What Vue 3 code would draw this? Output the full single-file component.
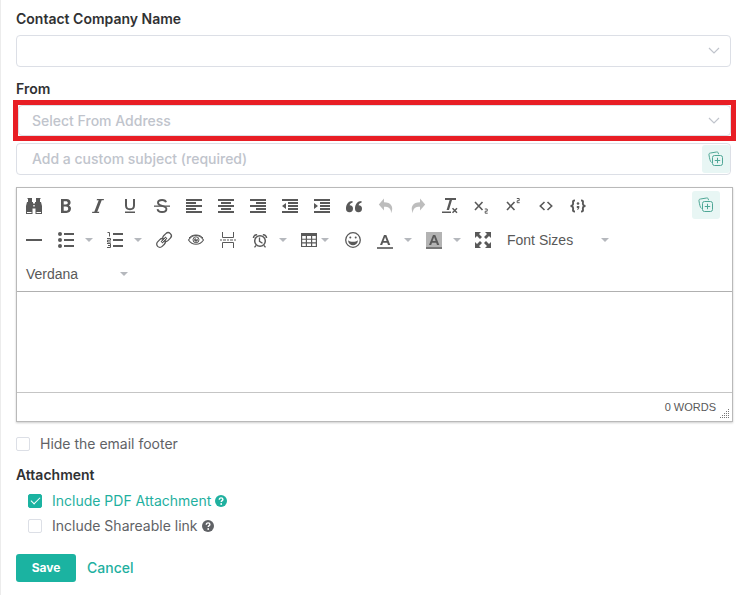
<script setup>
import { ref } from 'vue'

const company = ref('')
const from = ref('')
const subject = ref('')
const body = ref('')
const hideFooter = ref(false)
const includePdf = ref(true)
const includeLink = ref(false)

const letterShape = '<path d="M3 12 7 2h2.300L13.300 12H11l-.8-2.300H6L5.200 12Zm3.600-4h3L8.100 4Z"/>'

const icons = {
  find: '<path d="M1.500 0h4.500v1H1.500zM10 0h4.500v1H10zM2 1h4v3H2zM10 1h4v3h-4zM1 4h6v1.500h2V4h6l1 4v8H9.500v-5.500h-3V16H0V8Z"/><path fill="#fff" d="M1 14h4.500v1H1zM10.500 14H15v1h-4.500zM7.300 7h1.400v1.500H7.300z"/>',
  bold: '<path fill-rule="evenodd" d="M3 1h5.500C11.200 1 12.600 2.500 12.600 4.500c0 1.400-.7 2.400-1.800 2.900C12.200 7.900 13 9 13 10.600 13 13.300 11.200 15 8.400 15H3Zm2.700 2.200v3.300h2c1.400 0 2.100-.6 2.100-1.700S9.100 3.200 7.700 3.200Zm0 5.400v4.200h2.200c1.500 0 2.300-.8 2.300-2.100s-.8-2.100-2.300-2.100Z"/>',
  italic: '<path d="M7 1h7l-.3 1.200h-2L7.300 13.800h2L9 15H2l.3-1.200h2L8.700 2.200h-2Z"/>',
  underline: '<path d="M3 1h2v6.500C5 9.500 6 10.300 8 10.300s3-.8 3-2.800V1h2v6.600c0 3-1.700 4.600-5 4.600s-5-1.600-5-4.600ZM3 13.500h10V15H3z"/>',
  strike: '<path d="M0 7.500h16v1.300H0z"/><path fill="none" stroke="currentColor" stroke-width="1.900" d="M12 4.300C11.700 2.700 10.300 2 8.100 2 5.600 2 4 3 4 4.700 4 8.800 12.400 6.800 12.400 11c0 2-1.700 3-4.300 3s-4.300-1-4.500-2.900"/>',
  left: '<path d="M0 1h16v2H0zM0 4h10v2H0zM0 7h16v2H0zM0 10h10v2H0zM0 13h16v2H0z"/>',
  center: '<path d="M0 1h16v2H0zM3 4h10v2H3zM0 7h16v2H0zM3 10h10v2H3zM0 13h16v2H0z"/>',
  right: '<path d="M0 1h16v2H0zM6 4h10v2H6zM0 7h16v2H0zM6 10h10v2H6zM0 13h16v2H0z"/>',
  outdent: '<path d="M0 1h16v2H0zM6 4h10v2H6zM6 7h10v2H6zM6 10h10v2H6zM0 13h16v2H0zM4 5v6L0 8Z"/>',
  indent: '<path d="M0 1h16v2H0zM6 4h10v2H6zM6 7h10v2H6zM6 10h10v2H6zM0 13h16v2H0zM0 5l4 3-4 3Z"/>',
  quote: '<path d="M3.600 7.200A3.500 3.500 0 1 1 0 10.700C-.2 6.500 2.500 3 6.500 3v1.800c-1.500 0-2.500 1-2.900 2.400ZM12.600 7.200A3.500 3.500 0 1 1 9 10.700C8.800 6.500 11.500 3 15.500 3v1.800c-1.500 0-2.500 1-2.900 2.400Z"/>',
  undo: '<path d="M6 .5v3.700c7 0 10.300 4.800 7 11 .3-4.500-2.200-6.400-7-6.400v3.700L.8 6.500Z"/>',
  redo: '<path d="M10 .5v3.700c-7 0-10.300 4.800-7 11-.3-4.500 2.200-6.400 7-6.400v3.700l5.200-6Z"/>',
  clear: '<path d="M3 0h11v2h-4L7 12H4.600l3-10H3ZM0 13.500h9V15H0z"/><path fill="none" stroke="currentColor" stroke-width="1.500" d="m10.500 10.300 4.500 4.500m0-4.500-4.500 4.500"/>',
  sub: '<path fill="none" stroke="currentColor" stroke-width="1.600" d="m1 4 7.500 8m0-8L1 12"/><path fill="none" stroke="currentColor" d="M10.800 11h2.400v2.200h-2v2h2.500"/>',
  sup: '<path fill="none" stroke="currentColor" stroke-width="1.600" d="m1 4 7.500 8m0-8L1 12"/><path fill="none" stroke="currentColor" d="M10.800.500h2.400v2.200h-2v2h2.500"/>',
  code: '<path fill="none" stroke="currentColor" stroke-width="1.600" d="M6.500 4 2.300 8l4.200 4M9.500 4l4.200 4-4.200 4"/>',
  sample: '<path fill="none" stroke="currentColor" stroke-width="1.900" d="M5 2.500c-3 0-1.700 1.600-1.900 3.300C3 7.300 2 8 .5 8c1.500 0 2.500.7 2.600 2.200C3.300 12 2 13.500 5 13.500M11 2.500c3 0 1.700 1.600 1.900 3.300.1 1.500 1.100 2.200 2.600 2.200-1.500 0-2.500.7-2.600 2.200C12.700 12 14 13.500 11 13.500"/><circle cx="8" cy="5.500" r="1.300"/><path d="M6.800 8h2.500c.3 2.100-.4 3.500-2 4V11l.8-1H6.800Z"/>',
  rule: '<path d="M0 7h16v2H0z"/>',
  bullets: '<circle cx="2" cy="2" r="2"/><circle cx="2" cy="8" r="2"/><circle cx="2" cy="14" r="2"/><path d="M6 1h10v2H6zM6 7h10v2H6zM6 13h10v2H6z"/>',
  numbers: '<path d="M6 1h10v2H6zM6 7h10v2H6zM6 13h10v2H6z"/><path fill="none" stroke="currentColor" d="M.5.500h2V4.500M0 6.500h3.500v1.700H.5v1.800h3.500M0 11.500h3.500v4H0M1 13.500h2.500"/>',
  link: '<g fill="none" stroke="currentColor" transform="rotate(-45 8 8)"><rect x="-1" y="4.800" width="9.500" height="6.400" rx="3.200" stroke-width="1.300"/><rect x="7.500" y="4.800" width="9.500" height="6.400" rx="3.200" stroke-width="1.300"/><path stroke-width="2.600" d="M4.500 8h7"/><path stroke="#fff" stroke-width=".8" d="M5 8h6"/></g>',
  preview: '<g fill="none" stroke="currentColor"><path stroke-width="1.100" d="M.5 8C2.500 4.800 5 3.500 8 3.500s5.500 1.300 7.500 4.500c-2 3-4.500 4.300-7.500 4.300S2.500 11 .5 8Z"/><path d="M1 6C4 2 12 2 15 6"/><circle cx="8" cy="7.800" r="3"/></g><circle cx="8" cy="7.800" r="1.900"/><path fill="#fff" d="M7.700 6h1.500v1.400H7.700z"/>',
  pagebreak: '<path fill="none" stroke="currentColor" d="M2.500 0v5.500h11V0M2.500 16v-5.500h11V16"/><path d="M0 7.500h2v1H0zM3 7.500h3v1H3zM7 7.500h2v1H7zM10 7.500h3v1h-3zM14 7.500h2v1h-2z"/>',
  alarm: '<g fill="none" stroke="currentColor"><circle cx="8" cy="9" r="5.300" stroke-width="1.500"/><path stroke-width="1.300" d="M7.500 5.500V9.300l3 2M4 13.500l-1.500 1.800M12 13.500l1.500 1.800"/><path stroke-width="1.600" d="M1.500 6c0-2 1.700-3.500 3.600-3.300M14.500 6c0-2-1.700-3.500-3.600-3.300"/></g>',
  table: '<path fill-rule="evenodd" d="M0 1h16v14H0Zm1.200 3v2.700h3.600V4Zm4.800 0v2.700h4V4Zm5.200 0v2.700h3.600V4ZM1.200 7.800v2.500h3.600V7.800Zm4.800 0v2.500h4V7.800Zm5.200 0v2.500h3.600V7.800ZM1.200 11.400v2.500h3.600v-2.500Zm4.800 0v2.500h4v-2.500Zm5.200 0v2.500h3.600v-2.500Z"/>',
  emoji: '<circle cx="8" cy="8" r="7.300" fill="none" stroke="currentColor" stroke-width="1.300"/><circle cx="5.300" cy="5.400" r="1"/><circle cx="10.700" cy="5.400" r="1"/><path fill-rule="evenodd" d="M3 8.300C5.500 10.300 10.500 10.300 13 8.300 12.500 15 3.500 15 3 8.300Z"/>',
  color: '<g transform="translate(0 1)">' + letterShape + '</g><path fill="#777" d="M0 15h16v2H0z"/>',
  background: '<path fill="#b3b3b3" d="M0 0h16v15H0z"/><g transform="translate(0 1)">' + letterShape + '</g><path fill="#777" d="M0 15h16v2H0z"/>',
  fullscreen: '<path d="M0 0h6L4 2l3 3-2 2-3-3-2 2ZM16 0v6l-2-2-3 3-2-2 3-3-2-2ZM0 16v-6l2 2 3-3 2 2-3 3 2 2ZM16 16h-6l2-2-3-3 2-2 3 3 2-2Z"/>'
}

const rowOne = [
  ['find', 'Find and replace'], ['bold', 'Bold'], ['italic', 'Italic'],
  ['underline', 'Underline'], ['strike', 'Strikethrough'], ['left', 'Align left'],
  ['center', 'Align center'], ['right', 'Align right'], ['outdent', 'Decrease indent'],
  ['indent', 'Increase indent'], ['quote', 'Blockquote'], ['undo', 'Undo', 'disabled'],
  ['redo', 'Redo', 'disabled'], ['clear', 'Clear formatting'], ['sub', 'Subscript'],
  ['sup', 'Superscript'], ['code', 'Source code'], ['sample', 'Code sample']
]
const rowTwo = [
  ['rule', 'Horizontal line'], ['bullets', 'Bullet list', 'split'], ['numbers', 'Numbered list', 'split'],
  ['link', 'Insert link'], ['preview', 'Preview'], ['pagebreak', 'Page break'],
  ['alarm', 'Insert date/time', 'split'], ['table', 'Table', 'menu'], ['emoji', 'Emoticons'],
  ['color', 'Text color', 'split'], ['background', 'Background color', 'split'], ['fullscreen', 'Fullscreen']
]
const toolRows = [rowOne, rowTwo]
</script>

<template>
  <form class="compose" @submit.prevent>
    <label class="heading" for="company">Contact Company Name</label>
    <div class="select-box company">
      <select id="company" v-model="company"><option value=""></option></select>
      <svg class="chevron" viewBox="0 0 12 8" aria-hidden="true"><path d="m1 1 5 5 5-5" /></svg>
    </div>

    <label class="heading" for="from">From</label>
    <div class="highlight">
      <div class="select-box">
        <select id="from" v-model="from"><option value="">Select From Address</option></select>
        <svg class="chevron" viewBox="0 0 12 8" aria-hidden="true"><path d="m1 1 5 5 5-5" /></svg>
      </div>
    </div>
    <div class="subject">
      <input v-model="subject" type="text" aria-label="Subject" placeholder="Add a custom subject (required)">
      <button type="button" class="insert" aria-label="Insert subject field">
        <svg viewBox="0 0 16 16" aria-hidden="true"><path d="M3.500 11.500C2 10.500 1.500 7 1 4 .8 2.600 1.300 2.200 2.500 2L8.500 1c1.300-.2 1.800.3 2 2.200" /><rect x="4.500" y="4.500" width="10" height="10" rx="2" /><path d="M9.500 6.800v5.400M6.800 9.500h5.400" /></svg>
      </button>
    </div>

    <div class="editor">
      <div class="toolbar">
        <div class="tool-rows">
          <div v-for="(row, i) in toolRows" :key="i" class="tool-row">
            <div v-for="[name, label, kind] in row" :key="name" class="tool" :class="kind">
              <button type="button" class="tool-button" :aria-label="label" :disabled="kind === 'disabled'">
                <svg class="glyph" viewBox="0 0 16 16" aria-hidden="true" v-html="icons[name]"></svg>
                <svg v-if="kind === 'menu'" class="caret" viewBox="0 0 8 4" aria-hidden="true"><path d="M0 0h8L4 4Z" /></svg>
              </button>
              <button v-if="kind === 'split'" type="button" class="more" :aria-label="label + ' options'">
                <svg class="caret" viewBox="0 0 8 4" aria-hidden="true"><path d="M0 0h8L4 4Z" /></svg>
              </button>
            </div>
            <button v-if="i === 1" type="button" class="list-button">
              Font Sizes
              <svg class="caret" viewBox="0 0 8 4" aria-hidden="true"><path d="M0 0h8L4 4Z" /></svg>
            </button>
          </div>
          <div class="tool-row">
            <button type="button" class="list-button">
              Verdana
              <svg class="caret" viewBox="0 0 8 4" aria-hidden="true"><path d="M0 0h8L4 4Z" /></svg>
            </button>
          </div>
        </div>
        <button type="button" class="insert" aria-label="Insert body field">
          <svg viewBox="0 0 16 16" aria-hidden="true"><path d="M3.500 11.500C2 10.500 1.500 7 1 4 .8 2.600 1.300 2.200 2.500 2L8.500 1c1.300-.2 1.800.3 2 2.200" /><rect x="4.500" y="4.500" width="10" height="10" rx="2" /><path d="M9.500 6.800v5.400M6.800 9.500h5.400" /></svg>
        </button>
      </div>
      <textarea v-model="body" class="message" aria-label="Message"></textarea>
      <div class="status">
        <span>0 WORDS</span>
        <svg class="grip" viewBox="0 0 10 10" aria-hidden="true"><path d="M8 0h1v1H8zM6 2h1v1H6zM8 2h1v1H8zM4 4h1v1H4zM6 4h1v1H6zM8 4h1v1H8zM2 6h1v1H2zM4 6h1v1H4zM6 6h1v1H6zM8 6h1v1H8zM0 8h1v1H0zM2 8h1v1H2zM4 8h1v1H4zM6 8h1v1H6zM8 8h1v1H8z" /></svg>
      </div>
    </div>

    <label class="check"><input v-model="hideFooter" type="checkbox"><span>Hide the email footer</span></label>

    <fieldset>
      <legend class="heading">Attachment</legend>
      <label class="check" :class="{ on: includePdf }">
        <input v-model="includePdf" type="checkbox"><span>Include PDF Attachment</span>
        <svg class="help" viewBox="0 0 12 12" aria-hidden="true"><circle cx="6" cy="6" r="6" /><path d="M4.300 4.700C4.300 3.500 5 2.900 6.100 2.900s1.800.6 1.800 1.500C7.900 5.600 6.200 5.600 6.200 7" /><circle class="dot" cx="6.200" cy="9" r=".9" /></svg>
      </label>
      <label class="check" :class="{ on: includeLink }">
        <input v-model="includeLink" type="checkbox"><span>Include Shareable link</span>
        <svg class="help" viewBox="0 0 12 12" aria-hidden="true"><circle cx="6" cy="6" r="6" /><path d="M4.300 4.700C4.300 3.500 5 2.900 6.100 2.900s1.800.6 1.800 1.500C7.900 5.600 6.200 5.600 6.200 7" /><circle class="dot" cx="6.200" cy="9" r=".9" /></svg>
      </label>
    </fieldset>

    <div class="actions">
      <button type="submit" class="save">Save</button>
      <button type="button" class="cancel">Cancel</button>
    </div>
  </form>
</template>

<style>
body {
  background: #fff;
}
</style>

<style scoped>
* {
  box-sizing: border-box;
}
.compose {
  min-height: 100vh;
  padding: 9px 14px 13px 15px;
  border-left: 1px solid #ececec;
  font-family: Inter, "Liberation Sans", sans-serif;
  font-size: 14px;
  font-weight: 500;
  line-height: 20px;
  color: #606266;
}
button,
input,
select,
textarea {
  margin: 0;
  font: inherit;
}
button {
  padding: 0;
  border: 0;
  background: none;
  color: inherit;
  cursor: pointer;
}
svg {
  display: block;
  flex: none;
}
.heading {
  display: block;
  padding: 0;
  font-weight: 600;
  color: #303133;
}
.select-box {
  display: grid;
  align-items: center;
}
.select-box select,
.chevron {
  grid-area: 1 / 1;
}
.select-box select {
  width: 100%;
  height: 32px;
  padding: 0 32px 0 15px;
  border: 1px solid #dcdfe6;
  border-radius: 4px;
  background: #fff;
  color: #c0c4cc;
  appearance: none;
}
.company {
  margin: 6px 0 12px;
}
.chevron {
  justify-self: end;
  width: 12px;
  height: 8px;
  margin-right: 11px;
  fill: none;
  stroke: #c0c4cc;
  stroke-width: 1.2;
  pointer-events: none;
}
.highlight {
  margin: 1px -5px 2px -3px;
  border: 5px solid #e81e25;
}
.highlight select {
  height: 31px;
  padding-left: 13px;
}
.subject {
  display: flex;
  align-items: center;
  height: 32px;
  border: 1px solid #dcdfe6;
  border-radius: 4px;
}
.subject input {
  flex: 1;
  min-width: 0;
  padding: 0 15px;
  border: 0;
  background: none;
  color: #606266;
}
.subject input::placeholder {
  color: #c0c4cc;
}
.insert {
  display: grid;
  flex: none;
  place-items: center;
  width: 28px;
  height: 28px;
  border-radius: 3px;
  background: #e8f6f4;
}
.insert svg {
  width: 16px;
  height: 16px;
  fill: none;
  stroke: #4fa796;
}
.editor {
  margin: 12px -2px 12px 0;
  border: 1px solid #b9b9b9;
  box-shadow: 0 1px 2px rgba(0, 0, 0, 0.2);
  font-family: "Liberation Sans", Arial, sans-serif;
  font-weight: 400;
  color: #595959;
}
.toolbar {
  display: flex;
  padding: 1px 12px 0 1px;
  border-bottom: 1px solid #b0b0b0;
}
.toolbar .insert {
  margin-top: 2px;
}
.tool-rows {
  flex: 1;
  min-width: 0;
}
.tool-row {
  display: flex;
  height: 34px;
}
.tool {
  display: flex;
}
.tool-button {
  display: flex;
  align-items: center;
  padding: 0 8px;
}
.glyph {
  width: 16px;
  height: 16px;
  fill: currentColor;
  overflow: visible;
}
.caret {
  width: 8px;
  height: 4px;
  fill: #b5b8bd;
}
.disabled {
  color: #bdbdbd;
}
.menu .caret {
  margin-left: 4px;
}
.more {
  width: 17px;
  padding-left: 3px;
}
.list-button {
  display: flex;
  align-items: center;
  justify-content: space-between;
  width: 118px;
  padding: 0 8px;
}
.message {
  display: block;
  width: 100%;
  height: 100px;
  padding: 8px;
  border: 0;
  outline: 0;
  resize: none;
}
.status {
  display: flex;
  align-items: center;
  justify-content: flex-end;
  gap: 4px;
  height: 29px;
  padding-right: 2px;
  border-top: 1px solid #c5c5c5;
  font-size: 11px;
}
.grip {
  align-self: flex-end;
  width: 10px;
  height: 10px;
  margin-bottom: 2px;
  fill: #777;
}
.check {
  display: flex;
  align-items: center;
  height: 20px;
  font-weight: 400;
}
.check input {
  display: grid;
  flex: none;
  place-items: center;
  width: 14px;
  height: 14px;
  margin-right: 10px;
  border: 1px solid #dcdfe6;
  border-radius: 2px;
  background: #fff;
  appearance: none;
}
.check input:checked {
  border-color: #1bb3a1;
  background: #1bb3a1;
}
.check input:checked::before {
  content: "";
  width: 8px;
  height: 4px;
  margin-bottom: 3px;
  border: solid #fff;
  border-width: 0 0 1px 1px;
  transform: rotate(-45deg);
}
.on {
  color: #1fb09f;
}
fieldset {
  display: grid;
  gap: 5px;
  margin: 11px 0 18px;
  padding: 6px 0 0 12px;
  border: 0;
}
legend {
  margin-left: -12px;
}
.help {
  width: 12px;
  height: 12px;
  margin-left: 4px;
  fill: currentColor;
}
.help path {
  fill: none;
  stroke: #fff;
  stroke-width: 1.4;
}
.dot {
  fill: #fff;
}
.actions {
  display: flex;
  align-items: center;
  gap: 11px;
}
.save {
  width: 60px;
  height: 28px;
  border-radius: 3px;
  background: #1bb3a1;
  color: #fff;
  font-size: 12px;
  font-weight: 700;
}
.cancel {
  color: #1fb09f;
}
</style>
